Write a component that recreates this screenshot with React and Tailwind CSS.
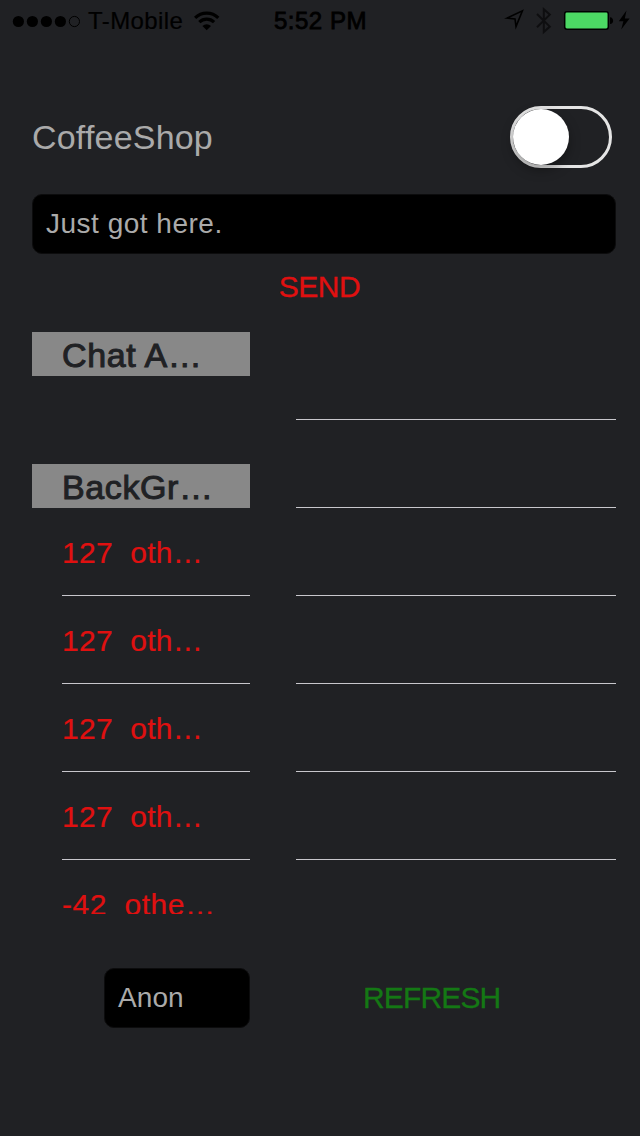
const others = ['127\u00a0 oth…', '127\u00a0 oth…', '127\u00a0 oth…', '127\u00a0 oth…'];

function StatusBar() {
  return (
    <header className="grid h-10 grid-cols-[274px_228px_138px] text-2xl leading-10 text-black">
      <div className="flex items-center whitespace-nowrap pl-3">
        <svg className="h-10 w-[70px] shrink-0" viewBox="0 0 70 40">
          <circle cx="6.4" cy="20.5" r="5.6" />
          <circle cx="20.4" cy="20.5" r="5.6" />
          <circle cx="34.4" cy="20.5" r="5.6" />
          <circle cx="48.4" cy="20.5" r="5.6" />
          <circle cx="62.4" cy="20.5" r="5.1" fill="none" stroke="black" />
        </svg>
        <span className="ml-1.5 w-[106px] pt-px tracking-[0.4px] [-webkit-text-stroke:0.2px_black]">T-Mobile</span>
        <svg className="h-10 w-[26px] shrink-0" viewBox="0 0 26 40" fill="none" stroke="black" strokeWidth="3.2">
          <path d="M1.1 16.8A16.5 16.5 0 0 1 24.3 16.8" />
          <path d="M5.3 21.2A10.6 10.6 0 0 1 20.1 21.2" />
          <path d="M12.7 29.2L8.4 24.9A6.2 6.2 0 0 1 17 24.9Z" fill="black" stroke="none" />
        </svg>
      </div>
      <div className="whitespace-nowrap pt-px tracking-[0.5px] [-webkit-text-stroke:0.8px_black]">5:52 PM</div>
      <svg className="h-10 w-[138px]" viewBox="502 0 138 40">
        <path d="M507 18.1L522.4 10.9L516 26.6L515 18.9Z" fill="none" stroke="black" strokeWidth="1.6" />
        <path d="M537 14L549.8 26.6L543.8 32V9.2L549.8 14.6L537 27.2" fill="none" stroke="#08080a" strokeOpacity="0.75" strokeWidth="2" />
        <rect x="564.7" y="11.7" width="43.6" height="17.6" rx="2.2" fill="#4cd964" stroke="black" strokeWidth="1.5" />
        <path d="M610 17.2C614.2 17.5 614.2 23.8 610 24Z" />
        <path d="M626.5 10.5L618.8 21.2H623.4L621.2 29.4L629.6 18.5H624.8Z" />
      </svg>
    </header>
  );
}

function SectionHeader({ children }) {
  return (
    <div className="h-11 shrink-0 whitespace-nowrap bg-[#888888] pl-[30px] text-[34px] leading-[46px] tracking-[0.6px] text-[#202124] [-webkit-text-stroke:1px_#202124]">
      {children}
    </div>
  );
}

export default function App() {
  return (
    <main className="flex h-[1136px] w-[640px] flex-col overflow-hidden bg-[#202124] font-['Liberation_Sans',sans-serif]">
      <StatusBar />
      <div className="mt-[66px] flex h-[62px] items-center justify-between pl-8 pr-7">
        <h1 className="text-[34px] leading-[62px] tracking-[0.2px] text-[#aaaaaa]">CoffeeShop</h1>
        <button aria-label="CoffeeShop" className="h-[62px] w-[102px] rounded-full border-[3px] border-[#e5e5e5]">
          <span className="block size-14 rounded-full bg-white shadow-[0_5px_12px_rgba(0,0,0,0.35)]" />
        </button>
      </div>
      <div className="ml-8 mr-6 mt-[26px] h-[60px] rounded-[10px] border border-[#0c0c0d] bg-black pl-[13px] text-[28px] leading-[58px] tracking-[0.5px] text-[#aaaaaa]">
        Just got here.
      </div>
      <button className="mt-[14px] h-9 pr-px pt-px text-center text-[30px] leading-9 tracking-[-0.5px] text-[#e01010] [-webkit-text-stroke:0.3px_#e01010]">SEND</button>
      <section className="ml-8 mt-7 grid h-[582px] grid-cols-[218px_320px] gap-x-[46px] overflow-hidden">
        <div className="flex h-[582px] flex-col overflow-hidden">
          <SectionHeader>Chat A…</SectionHeader>
          <div className="h-[88px] shrink-0" />
          <SectionHeader>BackGr…</SectionHeader>
          {others.map((label, i) => (
            <div key={i} className="ml-[30px] h-[88px] shrink-0 whitespace-nowrap border-b border-[#c8c7cc] text-[30px] leading-[89px] tracking-[0.3px] text-[#e01010] [-webkit-text-stroke:0.2px_#e01010]">
              {label}
            </div>
          ))}
          <div className="ml-[30px] h-[88px] shrink-0 whitespace-nowrap text-[30px] leading-[89px] tracking-[0.5px] text-[#e01010] [-webkit-text-stroke:0.2px_#e01010]">-42&nbsp; othe…</div>
        </div>
        <div>
          {Array.from({ length: 6 }, (_, i) => (
            <div key={i} className="h-[88px] border-b border-[#c8c7cc]" />
          ))}
        </div>
      </section>
      <footer className="mt-[54px] flex h-[60px] items-center pl-[104px]">
        <div className="h-[60px] w-[146px] rounded-[10px] border border-[#0c0c0d] bg-black pl-[13px] text-[28px] leading-[58px] tracking-[0.1px] text-[#aaaaaa]">Anon</div>
        <button className="ml-[113px] text-[30px] leading-[60px] tracking-[-0.85px] text-[#147814] [-webkit-text-stroke:0.3px_#147814]">REFRESH</button>
      </footer>
    </main>
  );
}
